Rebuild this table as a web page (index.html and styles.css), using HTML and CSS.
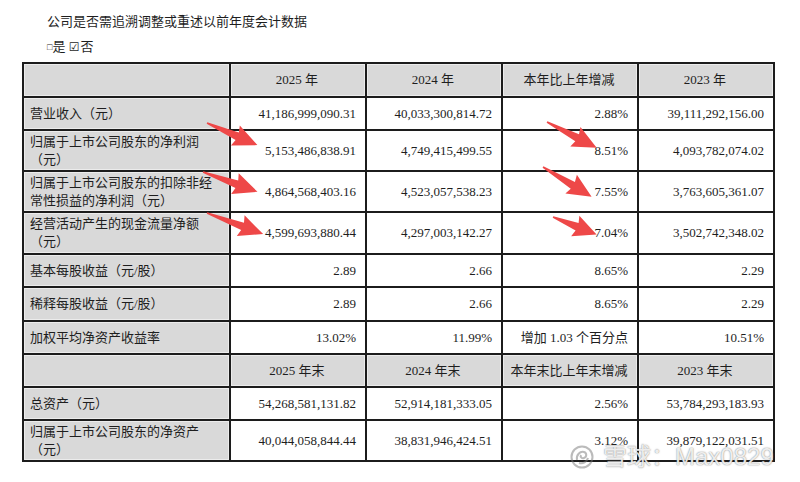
FILE: index.html
```html
<!DOCTYPE html>
<html lang="zh-CN">
<head>
<meta charset="utf-8">
<title>会计数据</title>
<link rel="stylesheet" href="styles.css">
</head>
<body>
<div class="page">
  <div class="title">公司是否需追溯调整或重述以前年度会计数据</div>
  <div class="choice"><span class="box">□</span>是 <span class="check">☑</span>否</div>
  <table class="data">
    <colgroup>
      <col class="c-label"><col class="c-num"><col class="c-num"><col class="c-num"><col class="c-num">
    </colgroup>
    <tr class="head h34">
      <th></th><th>2025 年</th><th>2024 年</th><th>本年比上年增减</th><th>2023 年</th>
    </tr>
    <tr class="h33">
      <th class="label">营业收入（元）</th><td>41,186,999,090.31</td><td>40,033,300,814.72</td><td>2.88%</td><td>39,111,292,156.00</td>
    </tr>
    <tr class="h41">
      <th class="label">归属于上市公司股东的净利润<br>（元）</th><td>5,153,486,838.91</td><td>4,749,415,499.55</td><td>8.51%</td><td>4,093,782,074.02</td>
    </tr>
    <tr class="h41">
      <th class="label">归属于上市公司股东的扣除非经<br>常性损益的净利润（元）</th><td>4,864,568,403.16</td><td>4,523,057,538.23</td><td>7.55%</td><td>3,763,605,361.07</td>
    </tr>
    <tr class="h42">
      <th class="label">经营活动产生的现金流量净额<br>（元）</th><td>4,599,693,880.44</td><td>4,297,003,142.27</td><td>7.04%</td><td>3,502,742,348.02</td>
    </tr>
    <tr class="h33">
      <th class="label">基本每股收益（元/股）</th><td>2.89</td><td>2.66</td><td>8.65%</td><td>2.29</td>
    </tr>
    <tr class="h34">
      <th class="label">稀释每股收益（元/股）</th><td>2.89</td><td>2.66</td><td>8.65%</td><td>2.29</td>
    </tr>
    <tr class="h33">
      <th class="label">加权平均净资产收益率</th><td>13.02%</td><td>11.99%</td><td>增加 1.03 个百分点</td><td>10.51%</td>
    </tr>
    <tr class="head h33">
      <th></th><th>2025 年末</th><th>2024 年末</th><th>本年末比上年末增减</th><th>2023 年末</th>
    </tr>
    <tr class="h33">
      <th class="label">总资产（元）</th><td>54,268,581,131.82</td><td>52,914,181,333.05</td><td>2.56%</td><td>53,784,293,183.93</td>
    </tr>
    <tr class="h41">
      <th class="label">归属于上市公司股东的净资产<br>（元）</th><td>40,044,058,844.44</td><td>38,831,946,424.51</td><td>3.12%</td><td>39,879,122,031.51</td>
    </tr>
  </table>

  <svg class="arrows" width="800" height="482" viewBox="0 0 800 482" aria-hidden="true">
    <g fill="#ee4848">
      <polygon transform="translate(207 123) rotate(23.7)" points="0,-0.8 33,-4 31,-11 55,0 31,11 33,4 0,0.8"/>
      <polygon transform="translate(203 172) rotate(20)" points="0,-0.8 36,-4 34,-11 58,0 34,11 36,4 0,0.8"/>
      <polygon transform="translate(207 213) rotate(20.6)" points="0,-0.8 38,-4 36,-11 60,0 36,11 38,4 0,0.8"/>
      <polygon transform="translate(547 122) rotate(27.5)" points="0,-0.8 34,-4 32,-11 56,0 32,11 34,4 0,0.8"/>
      <polygon transform="translate(543 167) rotate(31.5)" points="0,-0.8 35,-4 33,-11 57,0 33,11 35,4 0,0.8"/>
      <polygon transform="translate(553 217) rotate(22)" points="0,-0.8 26,-4 24,-11 47,0 24,11 26,4 0,0.8"/>
    </g>
  </svg>

  <div class="watermark">
    <svg class="wm-logo" width="24" height="24" viewBox="0 0 24 24" aria-hidden="true">
      <circle cx="12" cy="12" r="10.5" fill="none" stroke="rgba(120,120,120,0.5)" stroke-width="2"/>
      <path d="M7 15 C6 10 10 6 14 7 C17 8 17 12 14 13 C12 14 10 12 11 10" fill="none" stroke="rgba(120,120,120,0.5)" stroke-width="2"/>
      <path d="M9 18 C13 19 17 17 18 13" fill="none" stroke="rgba(120,120,120,0.5)" stroke-width="2"/>
    </svg>
    <span class="wm-text">雪球：Max0829</span>
  </div>
</div>
</body>
</html>
```

FILE: styles.css
```css
html, body {
  margin: 0;
  padding: 0;
  background: #ffffff;
}

.page {
  position: relative;
  width: 800px;
  height: 482px;
  overflow: hidden;
  padding-top: 12px;
  box-sizing: border-box;
  font-family: "Liberation Serif", "Noto Sans CJK SC", serif;
  font-size: 13px;
  color: #1e1e1e;
}

.title {
  margin-left: 47px;
  line-height: 20px;
}

.choice {
  margin-left: 47px;
  margin-top: 5px;
  line-height: 20px;
}

.box {
  font-size: 9px;
  vertical-align: 1px;
}

.check {
  font-family: "DejaVu Sans", sans-serif;
  font-size: 12px;
  margin-right: 1px;
}

.data {
  margin-top: 5px;
  margin-left: 22px;
  border-collapse: collapse;
  table-layout: fixed;
  width: 753px;
}

.c-label { width: 207px; }
.c-num { width: 136px; }

.data th,
.data td {
  border: 2px solid #1c1c1c;
  padding: 0 8px 0 6px;
  line-height: 18px;
  white-space: nowrap;
  vertical-align: middle;
}

.data td {
  text-align: right;
  padding-right: 9px;
  background: #ffffff;
}

.data th {
  font-weight: normal;
  background: #d9d9d9;
  box-shadow: inset 0 0 0 1px #ececec;
}

.data th.label {
  text-align: left;
}

.head th {
  text-align: center;
}

.h33 { height: 33px; }
.h34 { height: 34px; }
.h41 { height: 41px; }
.h42 { height: 42px; }

.arrows {
  position: absolute;
  left: 0;
  top: 0;
  pointer-events: none;
}

.watermark {
  position: absolute;
  left: 570px;
  top: 443px;
  display: flex;
  align-items: center;
  gap: 9px;
  pointer-events: none;
}

.wm-text {
  font-family: "Liberation Sans", "Noto Sans CJK SC", sans-serif;
  font-size: 24px;
  line-height: 28px;
  color: rgba(255, 255, 255, 0.85);
  text-shadow: 0 0 1px rgba(90, 90, 90, 0.6), 0 0 2px rgba(90, 90, 90, 0.4);
}
```
